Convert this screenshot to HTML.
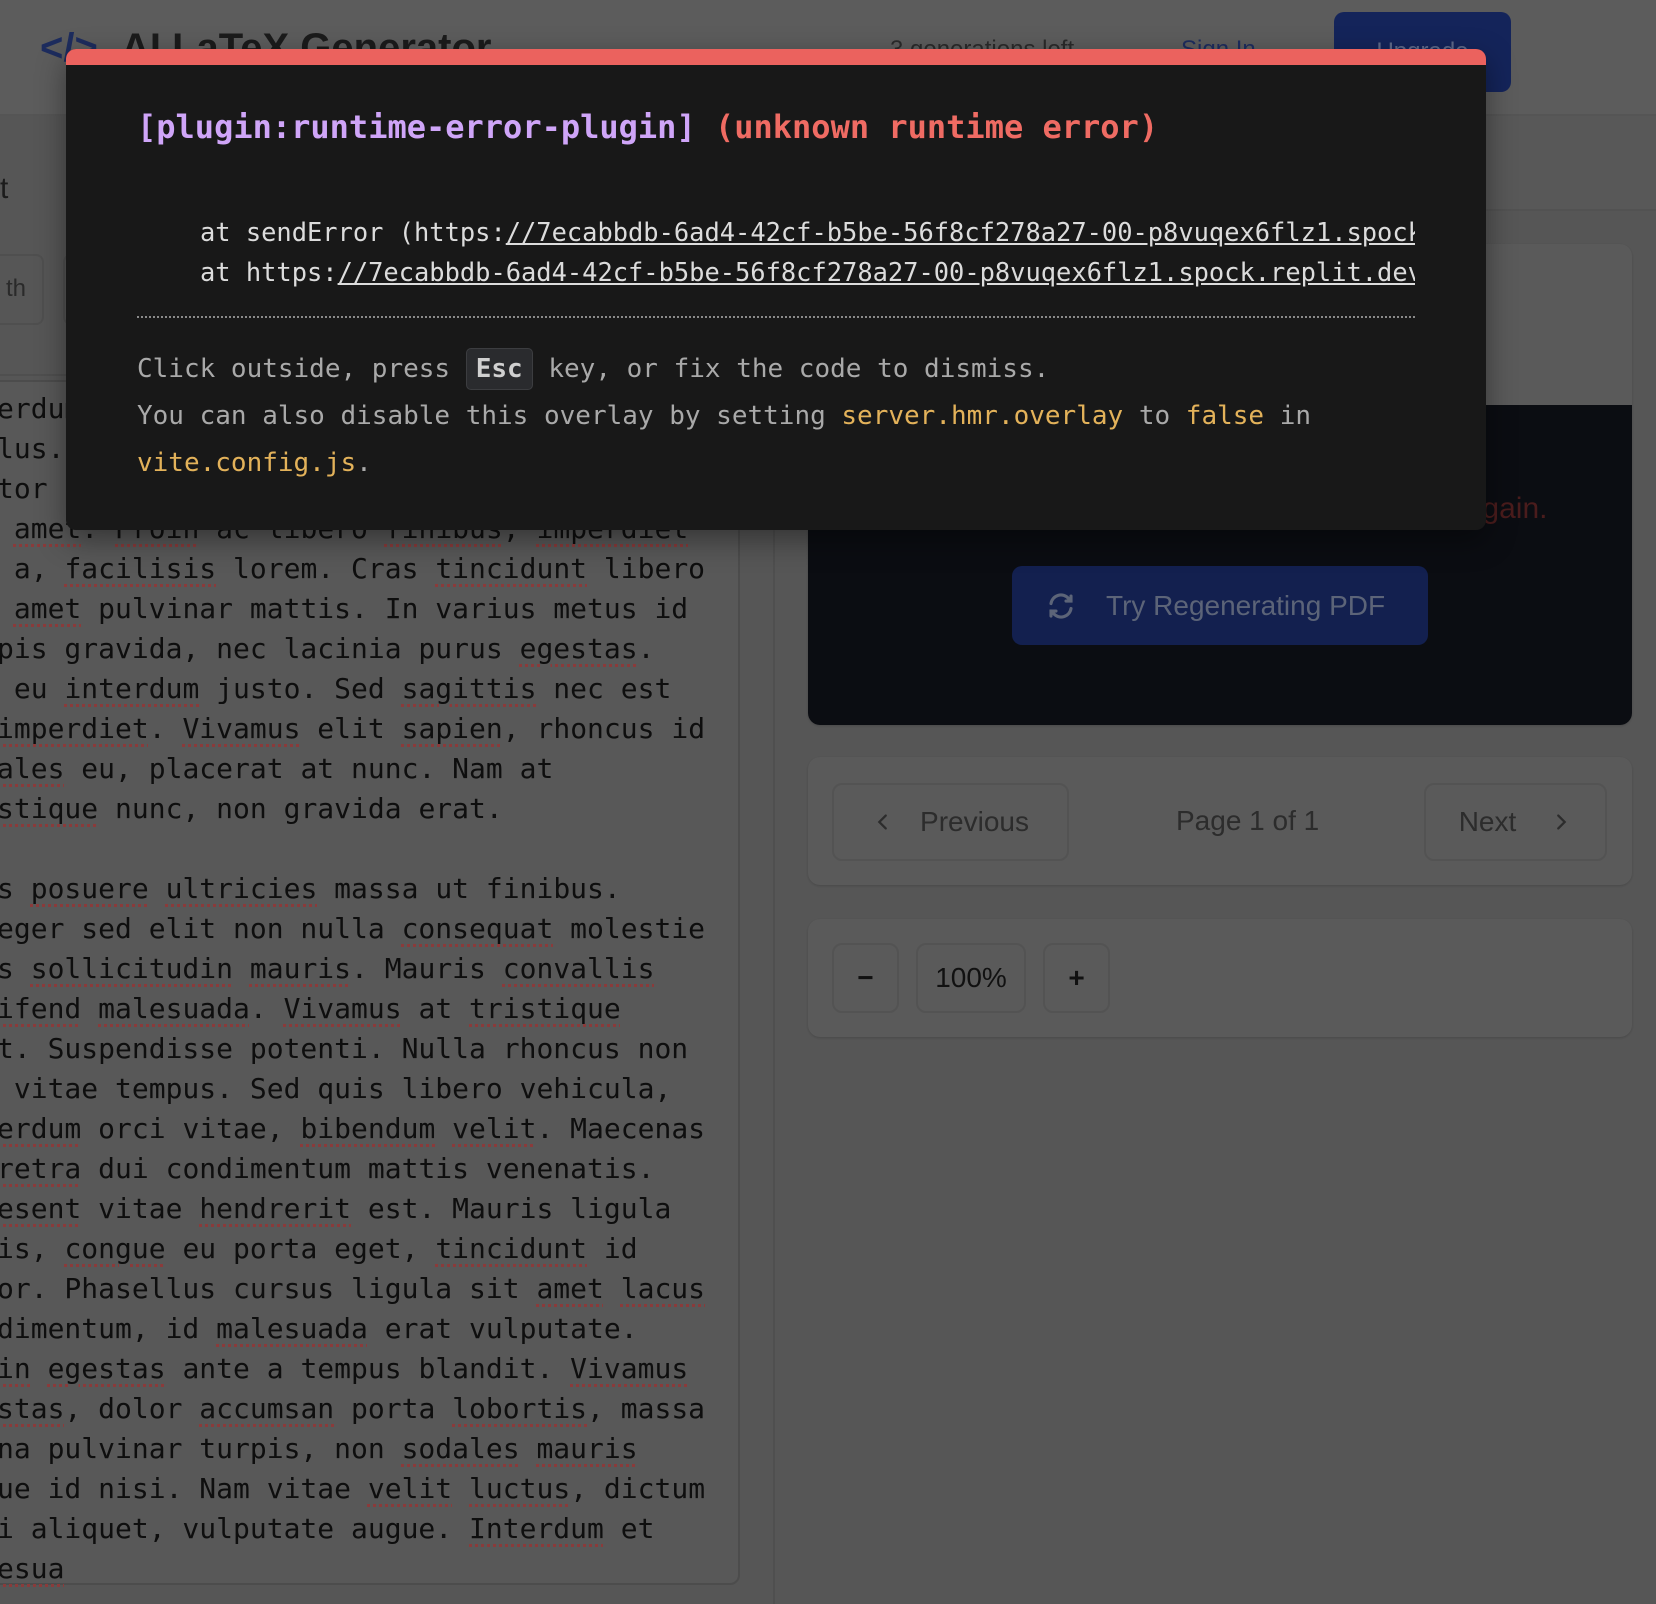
<!DOCTYPE html>
<html><head><meta charset="utf-8"><style>
*{margin:0;padding:0;box-sizing:border-box}
body{width:1656px;height:1604px;overflow:hidden;background:#565656;position:relative;font-family:"Liberation Sans",sans-serif}
.a{position:absolute}
.mono{font-family:"DejaVu Sans Mono","Liberation Mono",monospace}
.u{text-decoration:underline dotted #8a3b3b;text-decoration-thickness:3px;text-underline-offset:6px}
#txt div{height:40px;line-height:40px;white-space:pre;font-size:28px;color:#0e0e0e}
.card{background:#5a5a5a;border-radius:12px;box-shadow:0 1px 2px rgba(0,0,0,.15)}
.btn{position:absolute;border:2px solid #535353;border-radius:10px;display:flex;align-items:center;justify-content:center;color:#2c2c2c;font-size:28px}
</style></head><body>
<!-- header -->
<div class="a" style="left:0;top:0;width:1656px;height:116px;background:#5c5c5c;border-bottom:2px solid #555"></div>
<div class="a" style="left:40px;top:26px;font-size:40px;font-weight:bold;color:#1d2c5e">&lt;/&gt;</div>
<div class="a" style="left:121px;top:26px;font-size:40px;font-weight:bold;color:#1b1b1b">AI LaTeX Generator</div>
<div class="a" style="left:890px;top:36px;font-size:24px;color:#2a2a2a">3 generations left</div>
<div class="a" style="left:1181px;top:36px;font-size:24px;color:#1d2c5e">Sign In</div>
<div class="a" style="left:1334px;top:12px;width:177px;height:80px;background:#14245a;border-radius:10px;color:#5f6a8a;font-size:24px;display:flex;align-items:center;justify-content:center">Upgrade</div>
<!-- left -->
<div class="a" style="left:0;top:172px;font-size:30px;color:#1b1b1b">t</div>
<div class="a" style="left:-20px;top:254px;width:64px;height:71px;border:2px solid #4f4f4f;border-radius:8px;font-size:24px;color:#2a2a2a;line-height:66px;text-align:right;padding-right:16px">th</div>
<div class="a" style="left:63px;top:254px;width:40px;height:71px;border:2px solid #4f4f4f;border-radius:8px"></div>
<div class="a" style="left:0;top:374px;width:774px;height:2px;background:#4f4f4f"></div>
<div class="a" style="left:-10px;top:380px;width:750px;height:1205px;border:2px solid #4c4c4c;border-radius:10px;background:#585858"></div>
<div class="a" style="left:773px;top:116px;width:2px;height:1488px;background:#4f4f4f"></div>
<div id="txt" class="a mono" style="left:-3px;top:389px">
<div>erdum ipsum</div>
<div>lus.</div>
<div>tor </div>
<div> <span class="u">amet</span>. <span class="u">Proin</span> ac libero <span class="u">finibus</span>, <span class="u">imperdiet</span></div>
<div> a, <span class="u">facilisis</span> lorem. Cras <span class="u">tincidunt</span> libero</div>
<div> <span class="u">amet</span> pulvinar mattis. In varius metus id</div>
<div>pis gravida, nec lacinia purus <span class="u">egestas</span>.</div>
<div> eu <span class="u">interdum</span> justo. Sed <span class="u">sagittis</span> nec est</div>
<div><span class="u">imperdiet</span>. <span class="u">Vivamus</span> elit <span class="u">sapien</span>, rhoncus id</div>
<div><span class="u">ales</span> eu, placerat at nunc. Nam at</div>
<div><span class="u">stique</span> nunc, non gravida erat.</div>
<div> </div>
<div>s <span class="u">posuere</span> <span class="u">ultricies</span> massa ut finibus.</div>
<div>eger sed elit non nulla <span class="u">consequat</span> molestie</div>
<div>s <span class="u">sollicitudin</span> <span class="u">mauris</span>. Mauris <span class="u">convallis</span></div>
<div><span class="u">ifend</span> <span class="u">malesuada</span>. <span class="u">Vivamus</span> at <span class="u">tristique</span></div>
<div>t. Suspendisse potenti. Nulla rhoncus non</div>
<div> vitae tempus. Sed quis libero vehicula,</div>
<div><span class="u">erdum</span> orci vitae, <span class="u">bibendum</span> <span class="u">velit</span>. Maecenas</div>
<div><span class="u">retra</span> dui condimentum mattis venenatis.</div>
<div><span class="u">esent</span> vitae <span class="u">hendrerit</span> est. Mauris ligula</div>
<div>is, <span class="u">congue</span> eu porta eget, <span class="u">tincidunt</span> id</div>
<div>or. Phasellus cursus ligula sit <span class="u">amet</span> <span class="u">lacus</span></div>
<div>dimentum, id <span class="u">malesuada</span> erat vulputate.</div>
<div><span class="u">in</span> <span class="u">egestas</span> ante a tempus blandit. <span class="u">Vivamus</span></div>
<div><span class="u">stas</span>, dolor <span class="u">accumsan</span> porta <span class="u">lobortis</span>, massa</div>
<div>na pulvinar turpis, non <span class="u">sodales</span> <span class="u">mauris</span></div>
<div>ue id nisi. Nam vitae <span class="u">velit</span> <span class="u">luctus</span>, dictum</div>
<div>i aliquet, vulputate augue. <span class="u">Interdum</span> et</div>
<div><span class="u">esua</span></div>
</div>
<!-- right -->
<div class="a" style="left:775px;top:116px;width:881px;height:95px;background:#585858;border-bottom:2px solid #525252"></div>
<div class="a card" style="left:808px;top:244px;width:824px;height:481px;overflow:hidden">
  <div class="a" style="left:0;top:161px;width:824px;height:320px;background:#0b0d12"></div>
</div>
<div class="a" style="left:1324px;top:492px;font-size:30px;color:#4a1c1c">Please try again.</div>
<div class="a" style="left:1012px;top:566px;width:416px;height:79px;background:#13204f;border-radius:10px;color:#5c6478;font-size:28px;display:flex;align-items:center">
<svg style="margin-left:34px" width="30" height="30" viewBox="0 0 24 24" fill="none" stroke="#5c6478" stroke-width="2.5" stroke-linecap="round"><path d="M4 10a8 8 0 0 1 14-4l2 2M20 4v4h-4M20 14a8 8 0 0 1-14 4l-2-2M4 20v-4h4"/></svg>
<span style="margin-left:30px">Try Regenerating PDF</span></div>
<div class="a card" style="left:808px;top:757px;width:824px;height:128px"></div>
<div class="btn" style="left:832px;top:783px;width:237px;height:78px"><svg width="22" height="22" viewBox="0 0 24 24" fill="none" stroke="#2c2c2c" stroke-width="2.5" stroke-linecap="round" style="margin-right:26px"><path d="M15 5l-7 7 7 7"/></svg>Previous</div>
<div class="a" style="left:1176px;top:805px;font-size:28px;color:#2c2c2c">Page 1 of 1</div>
<div class="btn" style="left:1424px;top:783px;width:183px;height:78px">Next<svg width="22" height="22" viewBox="0 0 24 24" fill="none" stroke="#2c2c2c" stroke-width="2.5" stroke-linecap="round" style="margin-left:34px"><path d="M9 5l7 7-7 7"/></svg></div>
<div class="a card" style="left:808px;top:919px;width:824px;height:118px"></div>
<div class="btn" style="left:832px;top:943px;width:67px;height:70px;color:#111;font-weight:bold">−</div>
<div class="btn" style="left:916px;top:943px;width:110px;height:70px;color:#111">100%</div>
<div class="btn" style="left:1043px;top:943px;width:67px;height:70px;color:#111;font-weight:bold">+</div>
<!-- modal -->
<div class="a mono" style="left:66px;top:49px;width:1420px;height:481px;background:#181818;border-radius:10px;overflow:hidden;box-shadow:0 10px 30px rgba(0,0,0,.4)">
  <div style="height:16px;background:#eb625e"></div>
  <div class="a" style="left:71px;top:58px;font-size:32px;font-weight:bold;white-space:pre;line-height:40px"><span style="color:#cfa5f8">[plugin:runtime-error-plugin]</span> <span style="color:#ef6b63">(unknown runtime error)</span></div>
  <div class="a" style="left:134px;top:163px;width:1215px;overflow:hidden;font-size:25.4px;color:#dcdcdc;white-space:pre;line-height:40px">at sendError (https:<u>//7ecabbdb-6ad4-42cf-b5be-56f8cf278a27-00-p8vuqex6flz1.spock.replit.dev</u>
at https:<u>//7ecabbdb-6ad4-42cf-b5be-56f8cf278a27-00-p8vuqex6flz1.spock.replit.dev/</u></div>
  <div class="a" style="left:71px;top:267px;width:1278px;border-top:2px dotted #8a8a8a"></div>
  <div class="a" style="left:71px;top:297px;font-size:26px;color:#a9a9a9;white-space:pre;line-height:47px">Click outside, press <span style="display:inline-block;background:#2a2b2e;border:1px solid #3c3d40;border-radius:5px;color:#d0d0d0;font-weight:bold;padding:0 9px;line-height:40px">Esc</span> key, or fix the code to dismiss.
You can also disable this overlay by setting <span style="color:#e3b25a">server.hmr.overlay</span> to <span style="color:#e3b25a">false</span> in
<span style="color:#e3b25a">vite.config.js</span>.</div>
</div>
</body></html>
